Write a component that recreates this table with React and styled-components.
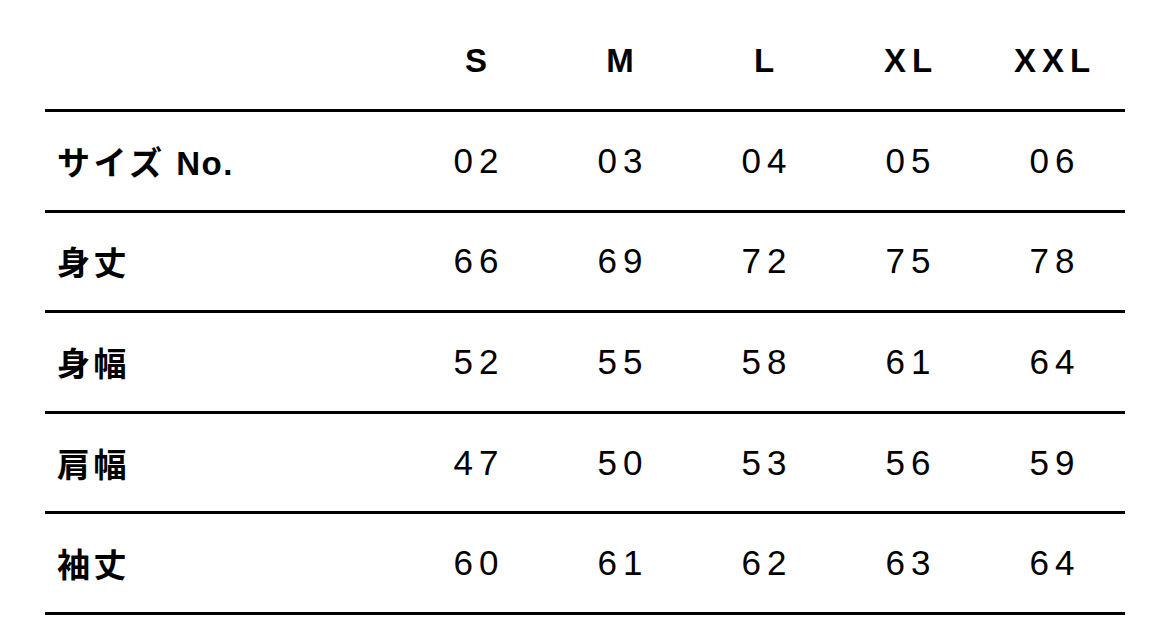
import * as React from 'react'
import styled, { createGlobalStyle } from 'styled-components'

const GlobalStyle = createGlobalStyle`
  html, body {
    margin: 0;
    padding: 0;
    background: #fff;
  }
  body {
    font-family: "Liberation Sans", "Noto Sans CJK JP", sans-serif;
    color: #000;
  }
`

const sizes = ['S', 'M', 'L', 'XL', 'XXL']

const rows = [
  { label: 'サイズ', extra: 'No.', values: ['02', '03', '04', '05', '06'] },
  { label: '身丈', values: ['66', '69', '72', '75', '78'] },
  { label: '身幅', values: ['52', '55', '58', '61', '64'] },
  { label: '肩幅', values: ['47', '50', '53', '56', '59'] },
  { label: '袖丈', values: ['60', '61', '62', '63', '64'] },
]

const Page = styled.main`
  width: 1170px;
  height: 630px;
  padding-left: 45px;
  box-sizing: border-box;
  overflow: hidden;
`

const Table = styled.div`
  width: 1080px;
`

const Row = styled.div`
  display: grid;
  grid-template-columns: 360px repeat(5, 144px);
  align-items: center;
  box-sizing: border-box;
  height: ${props => (props.$head ? '112px' : '100.6px')};
  padding-top: ${props => (props.$head ? '12px' : '0')};
  border-bottom: 3.5px solid #000;
`

const Label = styled.div`
  padding-left: 12px;
  font-size: 33px;
  font-weight: 700;
  letter-spacing: 3.5px;
  white-space: nowrap;
`

const Latin = styled.span`
  letter-spacing: 1.5px;
`

const SizeHead = styled.div`
  text-align: center;
  font-size: 33px;
  font-weight: 700;
  letter-spacing: 6px;
  padding-left: 4px;
`

const Value = styled.div`
  text-align: center;
  font-size: 35px;
  font-weight: 400;
  letter-spacing: 6px;
  padding-left: 4px;
`

export default function App() {
  return (
    <>
      <GlobalStyle />
      <Page>
        <Table>
          <Row $head>
            <div />
            {sizes.map(s => (
              <SizeHead key={s}>{s}</SizeHead>
            ))}
          </Row>
          {rows.map(row => (
            <Row key={row.label}>
              <Label>
                {row.label}
                {row.extra && <Latin> {row.extra}</Latin>}
              </Label>
              {row.values.map((v, i) => (
                <Value key={i}>{v}</Value>
              ))}
            </Row>
          ))}
        </Table>
      </Page>
    </>
  )
}
